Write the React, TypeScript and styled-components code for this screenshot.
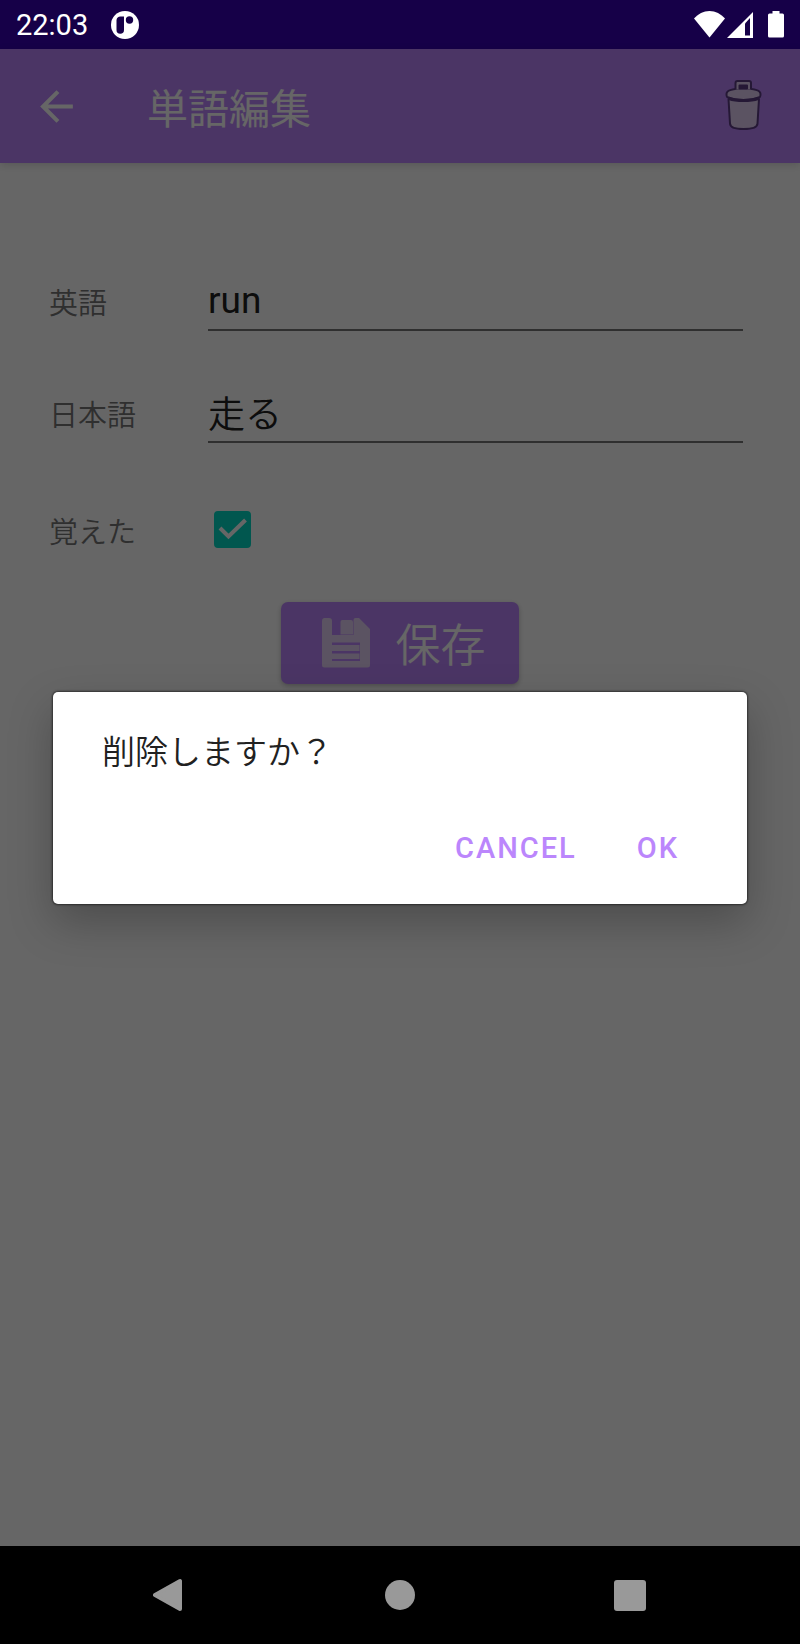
import React, { useState } from "react";
import styled, { createGlobalStyle } from "styled-components";

const japaneseFont = `"Noto Sans CJK JP", Roboto, sans-serif`;

const GlobalStyle = createGlobalStyle`
  *, *::before, *::after { box-sizing: border-box; }
  body {
    margin: 0;
    background: #000;
    font-family: Roboto, "Noto Sans CJK JP", sans-serif;
  }
  button, input { font: inherit; }
`;

const Phone = styled.div`
  display: flex;
  flex-direction: column;
  min-height: 100vh;
`;

const StatusBar = styled.header`
  display: flex;
  align-items: center;
  justify-content: space-between;
  height: 49px;
  padding: 0 15px 0 16px;
  background: #160048;
  color: #fff;
`;

const StatusGroup = styled.div<{ $gap: number }>`
  display: flex;
  align-items: center;
  gap: ${(p) => p.$gap}px;
`;

const Clock = styled.span`
  font-size: 29px;
  line-height: 32px;
`;

const Screen = styled.div`
  position: relative;
  display: flex;
  flex-direction: column;
  flex: 1;
  background: #fff;
`;

const AppBar = styled.div`
  display: flex;
  align-items: center;
  height: 114px;
  padding: 0 32px;
  background: #bb86fc;
  color: #fff;
  box-shadow: 0 2px 8px rgba(0, 0, 0, 0.15);
`;

const Title = styled.h1`
  flex: 1;
  margin: 0 0 0 66px;
  font-family: ${japaneseFont};
  font-size: 41px;
  font-weight: 400;
  line-height: 48px;
`;

const IconButton = styled.button`
  display: flex;
  align-items: center;
  justify-content: center;
  padding: 0;
  border: 0;
  background: none;
  color: inherit;
`;

const Form = styled.form`
  display: flex;
  flex-direction: column;
  padding: 82px 57px 0 49px;
`;

const Row = styled.div`
  display: flex;
  align-items: center;
  height: 112px;
`;

const CheckRow = styled(Row)`
  height: 121px;
`;

const Label = styled.label`
  width: 159px;
  color: #757575;
  font-family: ${japaneseFont};
  font-size: 29px;
  font-weight: 350;
  line-height: 40px;
`;

const TextInput = styled.input<{ $weight: number }>`
  flex: 1;
  min-width: 0;
  height: 60px;
  padding: 0;
  border: 0;
  border-bottom: 2px solid #757575;
  border-radius: 0;
  outline: 0;
  background: none;
  color: #212121;
  font-size: 37px;
  font-weight: ${(p) => p.$weight};
`;

const CheckWrap = styled.span`
  display: grid;
  margin-left: 6px;
  > * { grid-area: 1 / 1; }
`;

const CheckInput = styled.input`
  appearance: none;
  width: 37px;
  height: 37px;
  margin: 0;
  border: 4px solid #757575;
  border-radius: 4px;
  &:checked {
    border-color: #03dac5;
    background: #03dac5;
  }
`;

const CheckMark = styled.svg`
  pointer-events: none;
`;

const SaveButton = styled.button`
  display: flex;
  align-items: center;
  align-self: center;
  gap: 24px;
  height: 82px;
  margin: 12px 0 0 8px;
  padding: 0 33px 0 40px;
  border: 0;
  border-radius: 7px;
  background: #bb86fc;
  box-shadow: 0 2px 5px rgba(0, 0, 0, 0.25);
  color: #fff;
  font-family: ${japaneseFont};
  font-size: 45px;
  font-weight: 350;
  line-height: 56px;
`;

const Scrim = styled.div`
  position: absolute;
  inset: 0;
  display: flex;
  align-items: center;
  padding: 0 53px;
  background: rgba(0, 0, 0, 0.6);
`;

const Dialog = styled.section`
  display: flex;
  flex-direction: column;
  flex: 1;
  height: 212px;
  padding: 34px 46px 28px 49px;
  border-radius: 5px;
  background: #fff;
  box-shadow: 0 0 2px 1px rgba(0, 0, 0, 0.5), 0 18px 44px rgba(0, 0, 0, 0.25);
`;

const Message = styled.p`
  flex: 1;
  margin: 0;
  color: #212121;
  font-family: ${japaneseFont};
  font-size: 33px;
  font-weight: 350;
  line-height: 48px;
`;

const Actions = styled.div`
  display: flex;
  justify-content: flex-end;
  gap: 16px;
`;

const TextButton = styled.button`
  height: 56px;
  padding: 0 22px;
  border: 0;
  background: none;
  color: #bb86fc;
  font-size: 29px;
  font-weight: 500;
  letter-spacing: 2px;
`;

const NavBar = styled.nav`
  display: flex;
  justify-content: center;
  height: 98px;
  background: #000;
  color: #999;
`;

const NavButton = styled(IconButton)`
  width: 230px;
`;

export default function App() {
  const [english, setEnglish] = useState("run");
  const [japanese, setJapanese] = useState("走る");
  const [learned, setLearned] = useState(true);

  return (
    <>
      <GlobalStyle />
      <Phone lang="ja">
        <StatusBar>
          <StatusGroup $gap={23}>
            <Clock>22:03</Clock>
            <svg width="28" height="28" viewBox="0 0 28 28" aria-hidden="true">
              <circle cx="14" cy="14" r="14" fill="#fff" />
              <path d="M5.500 9a4 4 0 0 1 4-3.500h3.500v13.500a3.700 3.700 0 0 1-7.500 0z" fill="#160048" />
              <circle cx="18.500" cy="9" r="3.700" fill="#160048" />
            </svg>
          </StatusGroup>
          <StatusGroup $gap={2}>
            <svg width="31" height="27" viewBox="0 0 31 27" fill="#fff" aria-hidden="true">
              <path d="M0 7.500C4 3 9.500 0 15.500 0S27 3 31 7.500L15.500 26.500z" />
            </svg>
            <svg width="26" height="26" viewBox="0 0 26 26" fill="#fff" aria-hidden="true">
              <path d="M0 26L26 0v26z" />
              <path d="M18 23.500V11.500l5-5.500v17.500z" fill="#160048" />
            </svg>
            <svg width="30" height="27" viewBox="0 0 30 27" fill="#fff" aria-hidden="true">
              <path d="M17.500 0h7v2.500h3a1.500 1.500 0 0 1 1.500 1.500v21a1.500 1.500 0 0 1-1.500 1.500h-13a1.500 1.500 0 0 1-1.500-1.500V4a1.500 1.500 0 0 1 1.500-1.500h3z" />
            </svg>
          </StatusGroup>
        </StatusBar>

        <Screen>
          <AppBar>
            <IconButton type="button" aria-label="戻る">
              <svg width="49" height="49" viewBox="0 0 24 24" fill="currentColor">
                <path d="M20 11H7.830l5.590-5.590L12 4l-8 8 8 8 1.410-1.410L7.830 13H20v-2z" />
              </svg>
            </IconButton>
            <Title>単語編集</Title>
            <IconButton type="button" aria-label="削除">
              <svg width="50" height="52" viewBox="0 0 50 52" fill="#e4d0f4" stroke="#5c3c86" strokeWidth="2" strokeLinejoin="round">
                <path d="M10.500 19l1.500 24.500c0 4 5 5.500 13.500 5.500S39.500 47.500 39.500 43.500L41 19z" />
                <path d="M8.500 14c0-4 7-5.500 17-5.500s17 1.500 17 5.500-1 3-2 3.500c-3 1.500-8 2.500-15 2.500s-12-1-15-2.500c-1-.500-2 .500-2-3.500z" />
                <path d="M17.500 9.500V3a2 2 0 0 1 2-2h11.500a2 2 0 0 1 2 2v6.500" />
                <path d="M21.500 5.500h7.500v3h-7.500z" fill="#5c3c86" />
                <path d="M11 18.500c4 1.500 9 2 14.500 2s10.500-.500 14.500-2" fill="none" strokeWidth="3" />
              </svg>
            </IconButton>
          </AppBar>

          <Form onSubmit={(e) => e.preventDefault()}>
            <Row>
              <Label htmlFor="english">英語</Label>
              <TextInput
                id="english"
                $weight={400}
                value={english}
                onChange={(e) => setEnglish(e.target.value)}
              />
            </Row>
            <Row>
              <Label htmlFor="japanese">日本語</Label>
              <TextInput
                id="japanese"
                $weight={350}
                value={japanese}
                onChange={(e) => setJapanese(e.target.value)}
              />
            </Row>
            <CheckRow>
              <Label htmlFor="learned">覚えた</Label>
              <CheckWrap>
                <CheckInput
                  id="learned"
                  type="checkbox"
                  checked={learned}
                  onChange={(e) => setLearned(e.target.checked)}
                />
                {learned && (
                  <CheckMark width="37" height="37" viewBox="0 0 37 37" fill="none" stroke="#fff" strokeWidth="4">
                    <path d="M6 17l8.500 8.500L31.500 9" />
                  </CheckMark>
                )}
              </CheckWrap>
            </CheckRow>
            <SaveButton type="submit">
              <svg width="50" height="50" viewBox="0 0 50 50" fill="#e4d0f4" aria-hidden="true">
                <path fillRule="evenodd" d="M3 0h5a3 3 0 0 1 3 3v14h21.500V2a2 2 0 0 1 2-2H38l11 11v36a2.500 2.500 0 0 1-2.500 2.500h-43A2.500 2.500 0 0 1 1 47V3a3 3 0 0 1 2-3zM11 24.500v18.500h28V24.500z" />
                <path d="M21 2h9a2 2 0 0 1 2 2v12.500H19.500V4a2 2 0 0 1 1.500-2zM11 27h27.500v6H11zM11 35.500h27.500v5.500H11z" />
              </svg>
              保存
            </SaveButton>
          </Form>

          <Scrim>
            <Dialog role="alertdialog" aria-modal="true" aria-labelledby="message">
              <Message id="message">削除しますか？</Message>
              <Actions>
                <TextButton type="button">CANCEL</TextButton>
                <TextButton type="button">OK</TextButton>
              </Actions>
            </Dialog>
          </Scrim>
        </Screen>

        <NavBar>
          <NavButton type="button" aria-label="Back">
            <svg width="34" height="34" viewBox="0 0 34 34" fill="currentColor" stroke="currentColor" strokeWidth="4" strokeLinejoin="round">
              <path d="M27 3v28L2 17z" />
            </svg>
          </NavButton>
          <NavButton type="button" aria-label="Home">
            <svg width="30" height="30" viewBox="0 0 30 30" fill="currentColor">
              <circle cx="15" cy="15" r="15" />
            </svg>
          </NavButton>
          <NavButton type="button" aria-label="Overview">
            <svg width="32" height="32" viewBox="0 0 32 32" fill="currentColor">
              <rect width="32" height="31" y="1" rx="3" />
            </svg>
          </NavButton>
        </NavBar>
      </Phone>
    </>
  );
}
